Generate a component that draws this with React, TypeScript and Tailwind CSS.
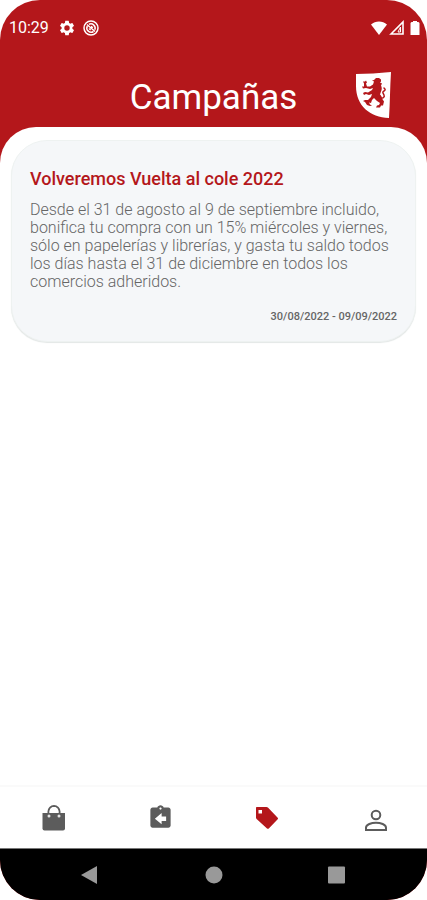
import React, { useState } from 'react';

interface Campaign {
  id: number;
  title: string;
  description: string;
  dates: string;
}

interface Tab {
  id: string;
  label: string;
  icon: React.ReactNode;
}

const campaigns: Campaign[] = [
  {
    id: 1,
    title: 'Volveremos Vuelta al cole 2022',
    description:
      'Desde el 31 de agosto al 9 de septiembre incluido, bonifica tu compra con un 15% miércoles y viernes, sólo en papelerías y librerías, y gasta tu saldo todos los días hasta el 31 de diciembre en todos los comercios adheridos.',
    dates: '30/08/2022 - 09/09/2022'
  }
];

const tabs: Tab[] = [
  {
    id: 'shop',
    label: 'Compras',
    icon: (
      <svg viewBox="0 0 24 28" className="w-6 h-7">
        <path d="M7.500 10V7.500a5.500 5.500 0 0 1 11 0V10" fill="none" stroke="currentColor" strokeWidth="2" />
        <path d="M1.500 9H24v15.500a2 2 0 0 1-2 2H3.500a2 2 0 0 1-2-2z" fill="currentColor" />
        <path d="M8.600 9V7.500a4.400 4.400 0 0 1 8.800 0V9z" fill="#fff" />
        <circle cx="8" cy="12" r="1.500" fill="#e5e5e5" />
        <circle cx="18" cy="12" r="1.500" fill="#e5e5e5" />
      </svg>
    )
  },
  {
    id: 'returns',
    label: 'Devoluciones',
    icon: (
      <svg viewBox="0 0 24 24" className="w-[27px] h-[27px]" fill="currentColor">
        <path d="M19 3h-4.180C14.400 1.840 13.300 1 12 1c-1.300 0-2.400.840-2.820 2H5c-1.100 0-2 .900-2 2v14c0 1.100.900 2 2 2h14c1.100 0 2-.900 2-2V5c0-1.100-.900-2-2-2zm-7 0c.550 0 1 .450 1 1s-.450 1-1 1-1-.450-1-1 .450-1 1-1zm5 12h-4v3l-6-5 6-5v3h4z" />
      </svg>
    )
  },
  {
    id: 'campaigns',
    label: 'Campañas',
    icon: (
      <svg viewBox="0 0 24 24" className="w-6 h-6" fill="currentColor">
        <path
          fillRule="evenodd"
          d="M2 1h9.500c.500 0 1 .200 1.400.600l9.800 10.200c.500.500.500 1 0 1.500l-8.900 9.100c-.600.600-1.200.600-1.800 0L1.600 13c-.400-.400-.600-.800-.600-1.400V2c0-.600.400-1 1-1zm1.500 3v3.500H7V4z"
        />
      </svg>
    )
  },
  {
    id: 'profile',
    label: 'Perfil',
    icon: (
      <svg viewBox="-4 -5 28 28" className="w-7 h-7" fill="none" stroke="currentColor" strokeWidth="2">
        <circle cx="12" cy="6" r="4.300" />
        <path d="M2 21v-2.300c0-3.200 5.500-5 10-5s10 1.800 10 5V21z" />
      </svg>
    )
  }
];

const Shield: React.FC = () => (
  <svg viewBox="0 0 36 48" className="w-9 h-12">
    <path d="M1 3C12 3 24 2 36 1c-1 15-1 31-2 46C15 46 1 35 1 15z" fill="#fff" />
    <path
      d="M19 9l2-2 3 0 2 1.500 0 2-1 1 2 1-1 2c1 2 1 4 0 6l-1 3c1 1 2 2 2 4l2 3-1 4-2 0-1 2-4 0 1-2 2-.500 1-2-3-2-3-3-2 2-1 3-2-.500 1 2 2 1-2 .500-3-1-2-3-2-1 2-1 3 0 3-3 1-3-3 1-3-1-2 1-1-2 2-1 3 .500 4-2.500 1-2-3 1-4-1-3 .500-1-2 2 0 0-3-1-2 2 0 1-1 1 2-1 1 1 3 3 0 3-2 1-3-2-1z"
      fill="#b4171b"
    />
    <path
      d="M24 27c4 1 6-1 5-3s-2-3 0-4 1-2 0-3"
      fill="none"
      stroke="#b4171b"
      strokeWidth="1.500"
      strokeLinecap="round"
    />
  </svg>
);

const StatusBar: React.FC = () => (
  <div className="flex h-14 items-center justify-between pl-[9px] pr-[7px] text-white">
    <div className="flex items-center">
      <span className="w-12 text-base">10:29</span>
      <svg viewBox="0 0 24 24" className="ml-[1px] mr-[7px] h-[18px] w-[18px]" fill="currentColor">
        <path d="M19.140 12.940c.040-.300.060-.610.060-.940 0-.320-.020-.640-.070-.940l2.030-1.580a.490.490 0 0 0 .120-.610l-1.920-3.320a.490.490 0 0 0-.590-.220l-2.390.960c-.500-.380-1.030-.700-1.620-.940l-.360-2.540a.480.480 0 0 0-.480-.410h-3.840c-.240 0-.430.170-.470.410l-.360 2.540c-.590.240-1.130.570-1.620.940l-2.390-.960a.480.480 0 0 0-.590.220L2.740 8.870c-.120.210-.080.470.120.610l2.030 1.580c-.050.300-.090.630-.090.940s.020.640.070.940l-2.030 1.580a.490.490 0 0 0-.120.610l1.920 3.320c.120.220.370.290.590.220l2.390-.960c.500.380 1.030.700 1.620.940l.360 2.540c.050.240.240.410.480.410h3.840c.240 0 .440-.170.470-.410l.360-2.540c.590-.240 1.130-.560 1.620-.940l2.390.960c.220.080.470 0 .590-.220l1.920-3.320c.120-.220.070-.470-.120-.610zM12 15.600a3.600 3.600 0 1 1 0-7.200 3.600 3.600 0 0 1 0 7.200z" />
      </svg>
      <svg viewBox="0 0 16 16" className="h-4 w-4" fill="none" stroke="currentColor" strokeWidth="1.500">
        <circle cx="8" cy="8" r="7" />
        <path d="M10.500 11.500A4.300 4.300 0 0 1 4.300 6M6 4.300a4.300 4.300 0 0 1 5.800 5.500" />
        <path d="M4 4.500l8 7M8 6.500a1.800 1.800 0 0 1 1.500 1.500M6.300 8.300a2 2 0 0 0 1.500 1.500" />
      </svg>
    </div>
    <div className="flex items-center">
      <svg viewBox="0 0 18 16" className="mr-px h-4 w-[18px]" fill="currentColor">
        <path d="M1 4.500C5.500.500 12.500.500 17 4.500L9 15z" />
      </svg>
      <svg viewBox="0 0 16 16" className="mr-[5px] h-4 w-4">
        <path d="M2 14L14 2v12z" fill="none" stroke="currentColor" strokeWidth="1.600" />
        <path d="M9 12l2.500-5v5z" fill="none" stroke="currentColor" strokeWidth="1" />
      </svg>
      <svg viewBox="0 0 10 16" className="h-4 w-[10px]" fill="currentColor">
        <path d="M3 1h4v1h1.500l1 1v12H.500V3l1-1H3z" />
      </svg>
    </div>
  </div>
);

const CampaignCard: React.FC<{ campaign: Campaign }> = ({ campaign }) => (
  <article className="rounded-[36px] border border-[#eef2f1] bg-[#f5f7f9] px-[18px] pt-7 pb-[18px] shadow-[0_1px_1px_#e3e7e6]">
    <h2 className="text-lg leading-5 font-medium text-[#b4171b]">{campaign.title}</h2>
    <p className="mt-3 text-base leading-[18px] font-light text-[#666]">{campaign.description}</p>
    <p className="mt-5 text-right text-[11px] leading-3 font-medium text-[#666]">{campaign.dates}</p>
  </article>
);

const App: React.FC = () => {
  const [activeTab, setActiveTab] = useState<string>('campaigns');

  return (
    <div className="flex min-h-screen flex-col overflow-hidden rounded-[40px] bg-[#b4171b] font-[Roboto,sans-serif]">
      <StatusBar />

      <header className="grid grid-cols-[1fr_auto_1fr] items-end px-9 pt-[15px] pb-2">
        <h1 className="col-start-2 text-[35px] leading-[42px] text-white">Campañas</h1>
        <div className="justify-self-end">
          <Shield />
        </div>
      </header>

      <main className="flex-1 rounded-t-[36px] bg-white px-[11px] pt-[13px]">
        {campaigns.map((campaign) => (
          <CampaignCard key={campaign.id} campaign={campaign} />
        ))}
      </main>

      {/* App tabs */}
      <nav className="grid h-[63px] grid-cols-4 border-t-2 border-[#fafafa] bg-white">
        {tabs.map((tab) => (
          <button
            key={tab.id}
            type="button"
            aria-label={tab.label}
            onClick={() => setActiveTab(tab.id)}
            className={`flex items-center justify-center ${
              activeTab === tab.id ? 'text-[#b4171b]' : 'text-[#5c5c5c]'
            }`}
          >
            {tab.icon}
          </button>
        ))}
      </nav>

      {/* System navigation */}
      <div className="flex h-[52px] items-center justify-between border-t border-[#777] bg-black px-20 text-[#999]">
        <button type="button" aria-label="Atrás">
          <svg viewBox="0 0 20 20" className="h-5 w-5" fill="currentColor">
            <path d="M17 1v18L1 10z" />
          </svg>
        </button>
        <button type="button" aria-label="Inicio">
          <svg viewBox="0 0 20 20" className="h-5 w-5" fill="currentColor">
            <circle cx="10" cy="10" r="8.500" />
          </svg>
        </button>
        <button type="button" aria-label="Recientes">
          <svg viewBox="0 0 20 20" className="h-5 w-5" fill="currentColor">
            <rect x="1" y="1.500" width="17" height="17" rx="1" />
          </svg>
        </button>
      </div>
    </div>
  );
};

export default App;
